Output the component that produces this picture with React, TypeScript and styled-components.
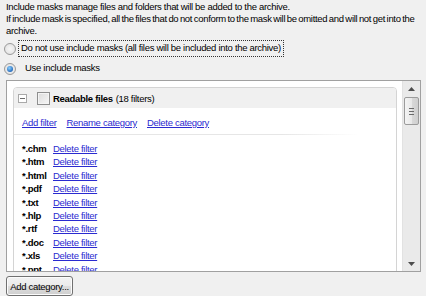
import React from "react";
import styled, { createGlobalStyle } from "styled-components";

const Global = createGlobalStyle`
  html, body { margin: 0; padding: 0; background: #f0f0f0; }
  body {
    font-family: "Liberation Sans", Arial, sans-serif;
    font-size: 9.5px;
    letter-spacing: -0.3px;
    color: #000;
    width: 426px;
    height: 296px;
    overflow: hidden;
  }
`;

const Page = styled.div`
  display: flex;
  flex-direction: column;
  height: 296px;
`;

const Description = styled.div`
  padding: 1px 6px 0 6px;
  line-height: 12px;
  white-space: nowrap;
`;

const DescLine = styled.div<{ $wordSpacing?: number }>`
  word-spacing: ${(p) => p.$wordSpacing ?? 0}px;
`;

const RadioRow = styled.div<{ $top: number }>`
  display: flex;
  align-items: center;
  height: 17px;
  margin-top: ${(p) => p.$top}px;
  padding-left: 4px;
`;

const Radio = styled.span<{ $checked?: boolean }>`
  width: 12px;
  height: 12px;
  border-radius: 50%;
  border: 1px solid #9a9a9a;
  background: radial-gradient(circle at 50% 50%, #f6f6f6 0%, #dedede 100%);
  box-sizing: border-box;
  display: flex;
  align-items: center;
  justify-content: center;
  flex: none;
  &::after {
    content: "";
    display: ${(p) => (p.$checked ? "block" : "none")};
    width: 6px;
    height: 6px;
    border-radius: 50%;
    background: radial-gradient(circle at 40% 35%, #8ad0ff 0%, #1a5fb4 80%);
  }
`;

const RadioLabel = styled.span<{ $focus?: boolean }>`
  margin-left: ${(p) => (p.$focus ? 2 : 6)}px;
  padding: 1px 2px 2px 2px;
  border: 1px dotted ${(p) => (p.$focus ? "#333" : "transparent")};
  line-height: 12px;
`;

const ListBox = styled.div`
  margin: 3px 5px 0 6px;
  height: 190px;
  border: 1px solid #a0a0a0;
  background: #fff;
  display: flex;
`;

const ListContent = styled.div`
  flex: 1;
  overflow: hidden;
  padding: 6px 5px 0 6px;
`;

const Panel = styled.div`
  border: 1px solid #d4d4d4;
  border-radius: 4px;
  height: 240px;
`;

const PanelHeader = styled.div`
  height: 20px;
  background: #f0f0f0;
  border-radius: 3px 3px 0 0;
  display: flex;
  align-items: center;
  padding-left: 4px;
`;

const Expander = styled.span`
  width: 9px;
  height: 9px;
  box-sizing: border-box;
  border: 1px solid #a9a9a9;
  background: #fff;
  display: flex;
  align-items: center;
  justify-content: center;
  &::after {
    content: "";
    width: 5px;
    height: 1px;
    background: #6b6b6b;
  }
`;

const CheckBox = styled.span`
  width: 13px;
  height: 13px;
  box-sizing: border-box;
  margin-left: 10px;
  border: 1px solid #8e8f8f;
  background: linear-gradient(135deg, #dcdcdc 0%, #f6f6f6 100%);
  box-shadow: inset 0 0 0 1px #f4f4f4;
`;

const Title = styled.span`
  margin-left: 3px;
  font-weight: bold;
`;

const Count = styled.span`
  font-weight: normal;
  margin-left: 3px;
`;

const Actions = styled.div`
  display: flex;
  gap: 10px;
  padding: 9px 0 0 8px;
  height: 17px;
  border-bottom: 1px solid;
  border-image: linear-gradient(to right, #e6e6e6 0%, #e6e6e6 70%, #ffffff 90%) 1;
  margin-bottom: 7px;
`;

const Link = styled.span`
  color: #2a2ad0;
  text-decoration: underline;
  cursor: pointer;
`;

const FilterRow = styled.div`
  display: flex;
  height: 13.4px;
  line-height: 13px;
  padding-left: 8px;
`;

const Ext = styled.span`
  width: 31px;
  font-weight: bold;
`;

const ScrollBar = styled.div`
  width: 17px;
  background: #eaeaea;
  border-left: 1px solid #e2e2e2;
  display: flex;
  flex-direction: column;
  align-items: center;
`;

const Arrow = styled.div`
  height: 15px;
  width: 17px;
  display: flex;
  align-items: center;
  justify-content: center;
`;

const Thumb = styled.div`
  width: 15px;
  height: 28px;
  margin-top: 1px;
  box-sizing: border-box;
  border: 1px solid #9b9b9b;
  border-radius: 2px;
  background: linear-gradient(to right, #f4f4f4 0%, #e9e9e9 50%, #d9d9d9 51%, #cfcfcf 100%);
  display: flex;
  align-items: center;
  justify-content: center;
`;

const Spacer = styled.div`
  flex: 1;
`;

const Button = styled.button`
  margin: 4px 0 0 6px;
  width: 67px;
  height: 20px;
  padding: 0;
  box-sizing: border-box;
  border: 1px solid #707070;
  border-radius: 3px;
  background: linear-gradient(to bottom, #f2f2f2 0%, #ebebeb 50%, #dddddd 51%, #cfcfcf 100%);
  font-family: "Liberation Sans", Arial, sans-serif;
  font-size: 9.5px;
  letter-spacing: -0.3px;
  color: #000;
  box-shadow: inset 0 0 0 1px #fcfcfc;
  white-space: nowrap;
`;

const filters = ["*.chm", "*.htm", "*.html", "*.pdf", "*.txt", "*.hlp", "*.rtf", "*.doc", "*.xls", "*.ppt"];

export default function App() {
  return (
    <>
      <Global />
      <Page>
        <Description>
          <DescLine>Include masks manage files and folders that will be added to the archive.</DescLine>
          <DescLine $wordSpacing={-0.8}>
            If include mask is specified, all the files that do not conform to the mask will be omitted and will not get into the
          </DescLine>
          <DescLine>archive.</DescLine>
        </Description>
        <RadioRow $top={3}>
          <Radio />
          <RadioLabel $focus>Do not use include masks (all files will be included into the archive)</RadioLabel>
        </RadioRow>
        <RadioRow $top={3}>
          <Radio $checked />
          <RadioLabel>Use include masks</RadioLabel>
        </RadioRow>
        <ListBox>
          <ListContent>
            <Panel>
              <PanelHeader>
                <Expander />
                <CheckBox />
                <Title>
                  Readable files<Count>(18 filters)</Count>
                </Title>
              </PanelHeader>
              <Actions>
                <Link>Add filter</Link>
                <Link>Rename category</Link>
                <Link>Delete category</Link>
              </Actions>
              {filters.map((f) => (
                <FilterRow key={f}>
                  <Ext>{f}</Ext>
                  <Link>Delete filter</Link>
                </FilterRow>
              ))}
            </Panel>
          </ListContent>
          <ScrollBar>
            <Arrow>
              <svg width="7" height="4" viewBox="0 0 7 4">
                <path d="M0 4 L3.5 0 L7 4 Z" fill="#4d4d4d" />
              </svg>
            </Arrow>
            <Thumb>
              <svg width="5" height="7" viewBox="0 0 5 7">
                <path d="M0 0.5 H5 M0 3.5 H5 M0 6.5 H5" stroke="#6a6a6a" strokeWidth="1" />
              </svg>
            </Thumb>
            <Spacer />
            <Arrow>
              <svg width="7" height="4" viewBox="0 0 7 4">
                <path d="M0 0 L3.5 4 L7 0 Z" fill="#4d4d4d" />
              </svg>
            </Arrow>
          </ScrollBar>
        </ListBox>
        <div>
          <Button>Add category...</Button>
        </div>
      </Page>
    </>
  );
}
